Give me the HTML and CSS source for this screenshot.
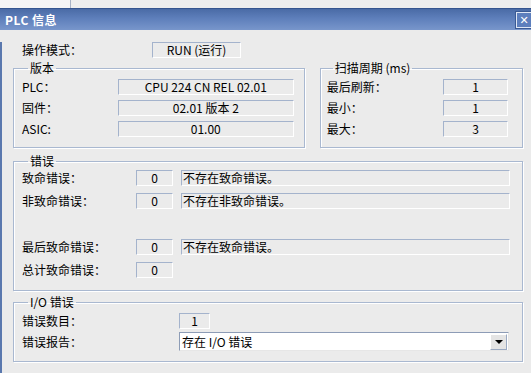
FILE: index.html
```html
<!DOCTYPE html>
<html lang="zh-CN">
<head>
    <meta charset="UTF-8">
    <title>PLC 信息</title>
    <link rel="stylesheet" href="styles.css">
</head>
<body>
    <div class="topstrip"><div class="tab"></div></div>
    <div class="window">
        <div class="titlebar">
            <span class="title">PLC 信息</span>
            <span class="close">✕</span>
        </div>
        <div class="content">
            <div class="mode-row">
                <span class="label">操作模式：</span>
                <span class="field mode">RUN (运行)</span>
            </div>

            <div class="top-groups">
                <fieldset class="group version">
                    <legend>版本</legend>
                    <div class="rows">
                        <span class="label">PLC：</span><span class="field">CPU 224 CN REL 02.01</span>
                        <span class="label">固件：</span><span class="field">02.01 版本 2</span>
                        <span class="label">ASIC:</span><span class="field">01.00</span>
                    </div>
                </fieldset>
                <fieldset class="group scan">
                    <legend>扫描周期 (ms)</legend>
                    <div class="rows">
                        <span class="label">最后刷新：</span><span class="field">1</span>
                        <span class="label">最小：</span><span class="field">1</span>
                        <span class="label">最大：</span><span class="field">3</span>
                    </div>
                </fieldset>
            </div>

            <fieldset class="group errors">
                <legend>错误</legend>
                <div class="err-rows">
                    <span class="label">致命错误：</span><span class="field">0</span><span class="field msg">不存在致命错误。</span>
                    <span class="label">非致命错误：</span><span class="field">0</span><span class="field msg">不存在非致命错误。</span>
                    <span class="blank"></span>
                    <span class="label">最后致命错误：</span><span class="field">0</span><span class="field msg">不存在致命错误。</span>
                    <span class="label">总计致命错误：</span><span class="field">0</span><span></span>
                </div>
            </fieldset>

            <fieldset class="group io">
                <legend>I/O 错误</legend>
                <div class="io-row">
                    <span class="label">错误数目：</span><span class="field count">1</span>
                </div>
                <div class="io-row report">
                    <span class="label">错误报告：</span>
                    <div class="combo">
                        <span class="combo-text">存在 I/O 错误</span>
                        <span class="combo-btn"><span class="arrow"></span></span>
                    </div>
                </div>
            </fieldset>
        </div>
    </div>
</body>
</html>
```

FILE: styles.css
```css
/* Reset */
* {
    margin: 0;
    padding: 0;
    box-sizing: border-box;
}

body {
    width: 531px;
    height: 373px;
    overflow: hidden;
    background-color: #ebebeb;
    font-family: "Noto Sans CJK SC", "DejaVu Sans", sans-serif;
    font-size: 12px;
    color: #000;
}

/* Strip above the dialog */
.topstrip {
    height: 8px;
    background-color: #eeeeee;
    display: flex;
}

.tab {
    width: 71px;
    border-right: 1px solid #a9b3c6;
    background-color: #f5f5f5;
}

/* Title bar */
.titlebar {
    height: 22px;
    display: flex;
    justify-content: space-between;
    align-items: center;
    padding-left: 5px;
    border-top: 1px solid #35558f;
    background: linear-gradient(#4a6ba6, #5e7fbb 45%, #7896cb);
}

.title {
    color: #fff;
    font-weight: bold;
    font-size: 12px;
    letter-spacing: 0.5px;
}

.close {
    width: 16px;
    height: 16px;
    margin-right: -1px;
    display: flex;
    align-items: center;
    justify-content: center;
    background-color: #5d7fbd;
    border: 1px solid #dfe7f5;
    outline: 1px solid #3a5a94;
    color: #fff;
    font-weight: bold;
    font-size: 11px;
    line-height: 1;
}

/* Dialog body */
.window {
    height: 365px;
}

.content {
    height: 343px;
    border-left: 2px solid #5a78ae;
    padding: 0 8px 0 11px;
}

.mode-row {
    display: flex;
    align-items: center;
    height: 16px;
    margin-top: 12px;
    padding-left: 9px;
}

.mode-row .label {
    width: 130px;
}

.field {
    height: 16px;
    display: flex;
    align-items: center;
    justify-content: center;
    border-top: 1px solid #a4b3cc;
    border-left: 1px solid #a4b3cc;
    border-right: 1px solid #fff;
    border-bottom: 1px solid #fff;
    white-space: nowrap;
    line-height: 14px;
}

.mode {
    width: 89px;
}

.label {
    line-height: 16px;
    white-space: nowrap;
}

/* Group boxes */
.group {
    border: 1px solid #a9b8d0;
    box-shadow: inset 1px 1px 0 #fff, 1px 1px 0 #fff;
}

.group legend {
    margin-left: 6px;
    padding: 0 2px;
    line-height: 14px;
}

.top-groups {
    display: flex;
    gap: 15px;
    margin-top: 3px;
}

.rows {
    display: grid;
    row-gap: 5px;
    align-items: center;
}

.version {
    width: 293px;
    height: 87px;
    padding: 4px 10px 0 8px;
}

.version .rows {
    grid-template-columns: 1fr 176px;
}

.scan {
    width: 204px;
    height: 87px;
    padding: 4px 14px 0 6px;
}

.scan .rows {
    grid-template-columns: 1fr 65px;
}

/* Errors */
.errors {
    margin-top: 6px;
    height: 137px;
    padding: 2px 12px 0 8px;
}

.err-rows {
    display: grid;
    grid-template-columns: 114px 37px 1fr;
    grid-auto-rows: 16px;
    row-gap: 7px;
    align-items: center;
}

.err-rows .msg {
    margin-left: 8px;
    justify-content: flex-start;
    padding-left: 1px;
}

.blank {
    grid-column: 1 / 4;
}

/* I/O errors */
.io {
    margin-top: 4px;
    height: 67px;
    padding: 4px 13px 0 8px;
}

.io-row {
    display: flex;
    align-items: center;
}

.io-row .label {
    width: 157px;
}

.count {
    width: 31px;
}

.report {
    margin-top: 3px;
}

.combo {
    width: 330px;
    height: 19px;
    display: flex;
    align-items: center;
    justify-content: space-between;
    background-color: #fff;
    border-top: 1px solid #8d9cb6;
    border-left: 1px solid #8d9cb6;
    border-right: 1px solid #e6e6e6;
    border-bottom: 1px solid #e6e6e6;
    padding: 0 0 0 2px;
}

.combo-text {
    line-height: 16px;
}

.combo-btn {
    width: 17px;
    height: 16px;
    margin-right: 1px;
    display: flex;
    align-items: center;
    justify-content: center;
    background-color: #e4e4e4;
    border: 1px solid #9aa9c2;
    border-top-color: #fff;
    border-left-color: #fff;
}

.arrow {
    width: 0;
    height: 0;
    border-left: 4px solid transparent;
    border-right: 4px solid transparent;
    border-top: 4px solid #000;
}
```
